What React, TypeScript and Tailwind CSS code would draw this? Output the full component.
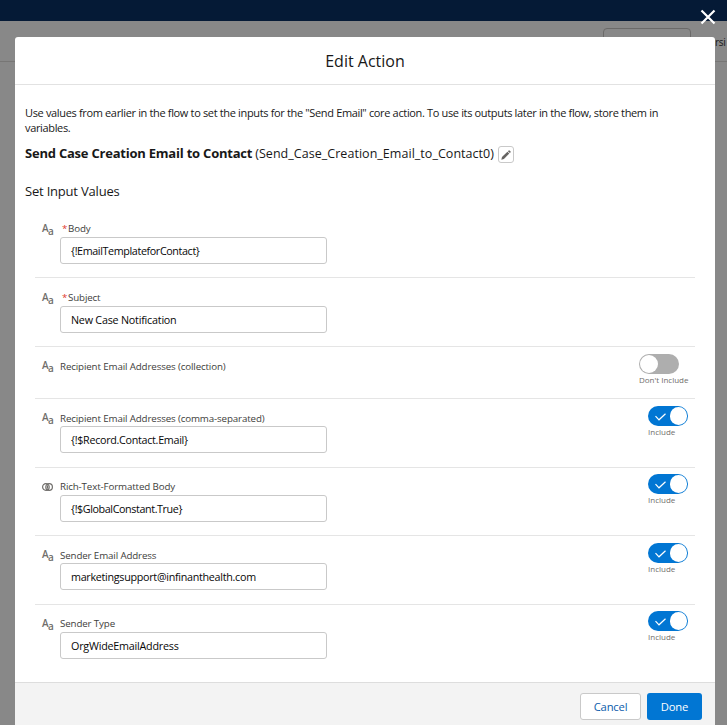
import React from "react";

type Row = {
  label: string;
  value?: string;
  required?: boolean;
  toggle?: "on" | "off";
  bool?: boolean;
  size: string;
  labelLeading: string;
  valueSpacing?: string;
};

const rows: Row[] = [
  { label: "Body", value: "{!EmailTemplateforContact}", required: true, size: "h-[69px] pt-3", labelLeading: "leading-4", valueSpacing: "tracking-[-0.38px]" },
  { label: "Subject", value: "New Case Notification", required: true, size: "h-[69px] pt-3", labelLeading: "leading-4", valueSpacing: "tracking-[-0.22px]" },
  { label: "Recipient Email Addresses (collection)", toggle: "off", size: "h-[52px] pt-[11px]", labelLeading: "leading-[18px]" },
  { label: "Recipient Email Addresses (comma-separated)", value: "{!$Record.Contact.Email}", toggle: "on", size: "h-[69px] pt-[11px]", labelLeading: "leading-[18px]", valueSpacing: "tracking-[-0.3px]" },
  { label: "Rich-Text-Formatted Body", value: "{!$GlobalConstant.True}", toggle: "on", bool: true, size: "h-[68px] pt-[11px]", labelLeading: "leading-4", valueSpacing: "tracking-[-0.4px]" },
  { label: "Sender Email Address", value: "marketingsupport@infinanthealth.com", toggle: "on", size: "h-[69px] pt-[11px]", labelLeading: "leading-[18px]", valueSpacing: "tracking-[-0.29px]" },
  { label: "Sender Type", value: "OrgWideEmailAddress", toggle: "on", size: "h-[77px] pt-[11px]", labelLeading: "leading-4", valueSpacing: "tracking-[-0.22px]" },
];

function TextTypeIcon() {
  return (
    <span className="flex w-[25px] shrink-0 pl-[7px] leading-4 text-[#706e6b]">
      <span className="-mt-px w-[6px] text-[10px] font-semibold tracking-[-0.3px]">A</span>
      <span className="mt-[2px] text-[10px] font-semibold">a</span>
    </span>
  );
}

function BooleanTypeIcon() {
  return (
    <span className="flex w-[25px] shrink-0 pt-1 pl-[7px]">
      <svg width="11" height="8" viewBox="0 0 11 8" fill="none" stroke="#706e6b">
        <circle cx="3.9" cy="4" r="3.3" strokeWidth="1.2" />
        <circle cx="7.1" cy="4" r="3.3" strokeWidth="1.2" />
        <path d="M5.5 1.5Q3.8 4 5.5 6.5Q7.2 4 5.5 1.5Z" fill="#706e6b" stroke="none" />
      </svg>
    </span>
  );
}

function Toggle({ on, raised }: { on: boolean; raised: boolean }) {
  return (
    <div className={`ml-auto mr-[7px] flex flex-col ${on ? "w-[40px]" : "w-[49px]"} ${raised ? "-mt-[5px]" : "-mt-1"}`}>
      <div className={`flex h-5 w-10 items-center rounded-full ${on ? "justify-end bg-[#0176d3] pr-px" : "bg-[#aeaeae] pl-px"}`}>
        {on && (
          <svg className="mt-px mr-[4px]" width="11" height="8" viewBox="0 0 11 8" fill="none" stroke="white" strokeWidth="1.2">
            <path d="M0.5 3.2L4 6.8L10.5 0.8" />
          </svg>
        )}
        <span className="size-[17.5px] rounded-full bg-white" />
      </div>
      <span className="h-3 text-[8px] leading-[12px] whitespace-nowrap text-[#706e6b]">{on ? "Include" : "Don't Include"}</span>
    </div>
  );
}

function InputRow({ row, last, raised }: { row: Row; last: boolean; raised: boolean }) {
  return (
    <div className={`mx-5 flex items-start ${row.size} ${last ? "" : "border-b border-[#e5e5e5]"}`}>
      {row.bool ? <BooleanTypeIcon /> : <TextTypeIcon />}
      <div className="w-[267px]">
        <div className={`flex h-4 text-[9.75px] tracking-[-0.13px] whitespace-nowrap text-[#3e3e3c] ${row.labelLeading}`}>
          {row.required && <span className="ml-[2px] w-[6px] text-[#e03a30]">*</span>}
          <span>{row.label}</span>
        </div>
        {row.value && (
          <div className={`flex h-[27px] items-center rounded-[3px] border border-[#c9c9c9] bg-white px-[10px] pt-[2px] text-[10.75px] leading-[17px] whitespace-nowrap text-[#080707] ${row.valueSpacing}`}>
            {row.value}
          </div>
        )}
      </div>
      {row.toggle && <Toggle on={row.toggle === "on"} raised={raised} />}
    </div>
  );
}

export default function App() {
  return (
    <div className="relative flex h-[725px] w-[727px] flex-col overflow-hidden bg-[#888888] font-['Open_Sans','Noto_Sans',sans-serif] text-[#181818]">
      <div className="h-[21px] shrink-0 bg-[#051a36]" />
      <div className="flex h-[41px] shrink-0 justify-end border-b border-[#777675]">
        <div className="mt-[7px] h-8 w-[88px] rounded-[4px] border border-[#6b6a69]" />
        <span className="mt-[14px] ml-[24px] w-[12px] text-[10px] leading-[15px] tracking-[-0.3px] text-[#181818]">rsi</span>
      </div>
      <svg className="absolute top-[9px] left-[700px]" width="16" height="16" viewBox="0 0 16 16" stroke="white" strokeWidth="2.2">
        <path d="M1.5 1.5L14.5 14.5M14.5 1.5L1.5 14.5" />
      </svg>

      <div className="absolute top-[37px] left-[15px] flex h-[688px] w-[700px] flex-col rounded-t-[3px] bg-white">
        <header className="flex h-[48px] shrink-0 items-center justify-center border-b border-[#e2e2e2] text-[16px]">
          <h1>Edit Action</h1>
        </header>
        <main className="flex h-[597px] shrink-0 flex-col">
          <p className="mt-[20px] ml-[10px] h-[30px] text-[11px] leading-[15px] tracking-[-0.345px] whitespace-nowrap">
            Use values from earlier in the flow to set the inputs for the "Send Email" core action. To use its outputs later in the flow, store them in
            <br />
            variables.
          </p>
          <div className="mt-[9px] ml-[10px] flex h-[20px] items-center text-[13px] whitespace-nowrap">
            <b className="font-bold tracking-[-0.22px]">Send Case Creation Email to Contact</b>
            <span className="ml-[3px] text-[12.5px] tracking-[0.04px]">(Send_Case_Creation_Email_to_Contact0)</span>
            <button className="ml-[3.5px] mt-px flex h-[17px] w-4 items-center justify-center rounded-[3px] border border-[#c9c9c9]">
              <svg width="10" height="10" viewBox="0 0 10 10" fill="#666462">
                <path d="M0.3 9.7L1 7.1L6.4 1.7L8.3 3.6L2.9 9Z" />
                <path d="M6.9 1.2L7.7 0.4Q8.1 0 8.5 0.4L9.6 1.5Q10 1.9 9.6 2.3L8.8 3.1Z" />
              </svg>
            </button>
          </div>
          <h2 className="mt-[17px] ml-[10px] h-[21px] text-[13px] leading-[20px] tracking-[-0.2px]">Set Input Values</h2>
          <div className="mt-[7px] flex flex-col">
            {rows.map((row, i) => (
              <InputRow key={row.label} row={row} last={i === rows.length - 1} raised={i === 4 || i === 6} />
            ))}
          </div>
        </main>
        <footer className="flex h-[43px] shrink-0 justify-end border-t border-[#dddddd] bg-[#f3f3f3] pt-[10px] pr-[13px] text-[11.25px] tracking-[-0.2px]">
          <button className="h-[27px] w-[61px] rounded-[3px] border border-[#c9c9c9] bg-white pt-px text-[#0b5cab]">Cancel</button>
          <button className="ml-[6px] h-[27px] w-[55px] rounded-[3px] bg-[#0176d3] pt-px text-white">Done</button>
        </footer>
      </div>
    </div>
  );
}
